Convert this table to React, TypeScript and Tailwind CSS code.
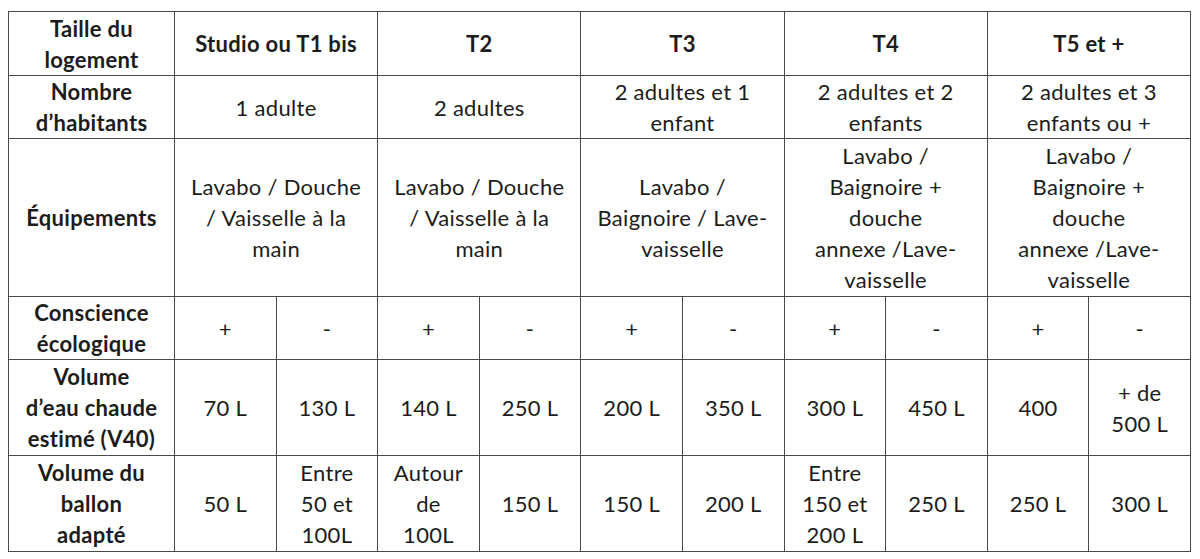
import { Fragment, ReactNode } from "react";

type Cell = { text: ReactNode; span?: number; bold?: boolean };

const br = (...lines: string[]) =>
  lines.map((l, i) => (
    <Fragment key={i}>
      {i > 0 && <br />}
      {l}
    </Fragment>
  ));

const rows: { label: ReactNode; cells: Cell[] }[] = [
  {
    label: br("Taille du", "logement"),
    cells: [
      { text: "Studio ou T1 bis", span: 2, bold: true },
      { text: "T2", span: 2, bold: true },
      { text: "T3", span: 2, bold: true },
      { text: "T4", span: 2, bold: true },
      { text: "T5 et +", span: 2, bold: true },
    ],
  },
  {
    label: br("Nombre", "d’habitants"),
    cells: [
      { text: "1 adulte", span: 2 },
      { text: "2 adultes", span: 2 },
      { text: br("2 adultes et 1", "enfant"), span: 2 },
      { text: br("2 adultes et 2", "enfants"), span: 2 },
      { text: br("2 adultes et 3", "enfants ou +"), span: 2 },
    ],
  },
  {
    label: "Équipements",
    cells: [
      { text: br("Lavabo / Douche", "/ Vaisselle à la", "main"), span: 2 },
      { text: br("Lavabo / Douche", "/ Vaisselle à la", "main"), span: 2 },
      { text: br("Lavabo /", "Baignoire / Lave-", "vaisselle"), span: 2 },
      { text: br("Lavabo /", "Baignoire +", "douche", "annexe /Lave-", "vaisselle"), span: 2 },
      { text: br("Lavabo /", "Baignoire +", "douche", "annexe /Lave-", "vaisselle"), span: 2 },
    ],
  },
  {
    label: br("Conscience", "écologique"),
    cells: Array.from({ length: 10 }, (_, i) => ({ text: i % 2 === 0 ? "+" : "-" })),
  },
  {
    label: br("Volume", "d’eau chaude", "estimé (V40)"),
    cells: [
      { text: "70 L" },
      { text: "130 L" },
      { text: "140 L" },
      { text: "250 L" },
      { text: "200 L" },
      { text: "350 L" },
      { text: "300 L" },
      { text: "450 L" },
      { text: "400" },
      { text: br("+ de", "500 L") },
    ],
  },
  {
    label: br("Volume du", "ballon", "adapté"),
    cells: [
      { text: "50 L" },
      { text: br("Entre", "50 et", "100L") },
      { text: br("Autour", "de", "100L") },
      { text: "150 L" },
      { text: "150 L" },
      { text: "200 L" },
      { text: br("Entre", "150 et", "200 L") },
      { text: "250 L" },
      { text: "250 L" },
      { text: "300 L" },
    ],
  },
];

export default function App() {
  return (
    <div className="w-[1200px] h-[559px] bg-white pl-2 pt-[11px] font-['Lato',sans-serif] text-[#1c1c1c] text-[22px] leading-[31px] tracking-[0.3px]">
      <div className="w-[1183px] grid grid-cols-[165px_repeat(10,1fr)] grid-rows-[63px_62px_157px_62px_95px_95px] gap-px p-px bg-[#4a4a4a]">
        {rows.map((row, r) => (
          <Fragment key={r}>
            <div className="bg-white flex items-center justify-center text-center font-bold whitespace-nowrap">
              <div>{row.label}</div>
            </div>
            {row.cells.map((c, i) => (
              <div
                key={i}
                className={`bg-white flex items-center justify-center text-center whitespace-nowrap ${
                  c.span === 2 ? "col-span-2" : ""
                } ${c.bold ? "font-bold" : ""}`}
              >
                <div>{c.text}</div>
              </div>
            ))}
          </Fragment>
        ))}
      </div>
    </div>
  );
}
